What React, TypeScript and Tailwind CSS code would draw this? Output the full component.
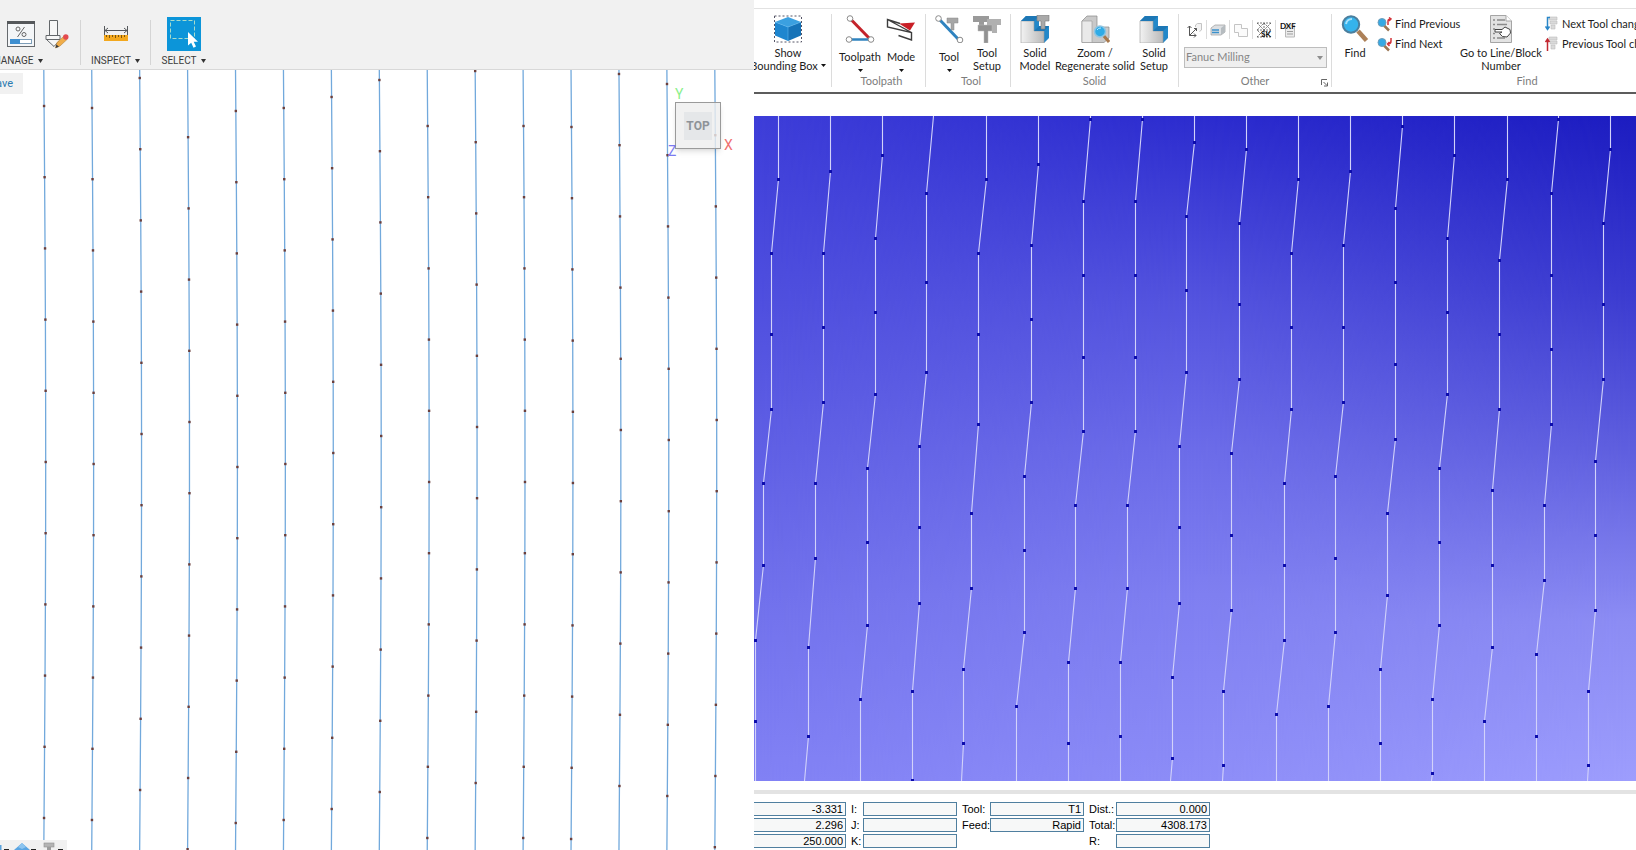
import { ReactNode } from 'react'
import { clsx } from 'clsx'

type Segment = [x: number, ys: number[]]

interface ToolpathLine {
  top:      number
  segments: Segment[]
  bottom:   number
}

// Simulated toolpath, one entry per pass
const PASSES: ToolpathLine[] = [
  { top: 25,  segments: [[25, [63]], [18, [137, 218, 293]], [10, [367, 449]], [2, [524, 605]]], bottom: 2 },
  { top: 77,  segments: [[77, [55]], [70, [137, 211, 286]], [62, [367, 442]], [55, [531, 620]]], bottom: 51 },
  { top: 129, segments: [[129, [39]], [122, [122, 196, 278]], [114, [352, 426, 509]], [107, [583]]], bottom: 107 },
  { top: 180, segments: [[173, [77, 166, 256]], [166, [330, 411, 487]], [159, [575, 664]]], bottom: 159 },
  { top: 233, segments: [[233, [63]], [225, [137, 218, 308]], [218, [397, 472]], [210, [553, 627]]], bottom: 208 },
  { top: 285, segments: [[285, [48]], [278, [129, 203, 286]], [271, [360, 434, 516]], [263, [590]]], bottom: 263 },
  { top: 337, segments: [[337, [3]], [330, [85, 159, 241, 315]], [322, [389, 472]], [315, [546, 627]]], bottom: 315 },
  { top: 389, segments: [[389, [3]], [382, [85, 159, 241, 315]], [374, [389, 472]], [367, [546, 620]]], bottom: 367 },
  { top: 441, segments: [[441, [26]], [433, [100, 174, 256]], [426, [330, 411, 487]], [419, [561, 642]]], bottom: 417 },
  { top: 493, segments: [[493, [33]], [486, [107, 188, 263]], [478, [337, 419, 494]], [470, [575, 649]]], bottom: 469 },
  { top: 545, segments: [[545, [63]], [538, [137, 211, 293]], [531, [367, 449, 524]], [523, [598]]], bottom: 523 },
  { top: 597, segments: [[597, [55]], [590, [129, 211, 286]], [582, [360, 442, 516]], [575, [590]]], bottom: 575 },
  { top: 649, segments: [[649, [10]], [642, [92, 166, 248, 323]], [634, [397, 479]], [627, [553, 627]]], bottom: 627 },
  { top: 701, segments: [[701, [39]], [694, [122, 196, 278]], [686, [352, 426, 509]], [679, [583, 657]]], bottom: 678 },
  { top: 754, segments: [[754, [63]], [746, [144, 218, 293]], [739, [374, 449, 531]], [731, [605]]], bottom: 731 },
  { top: 805, segments: [[805, [3]], [798, [77, 159, 233, 308]], [791, [389, 464]], [783, [538, 620]]], bottom: 783 },
  { top: 857, segments: [[857, [33]], [850, [107, 188, 263]], [842, [345, 419, 494]], [835, [575, 649]]], bottom: 834 },
]

// First point of every CAM line, measured from the top of the canvas
const CAM_STARTS = [36, 38, 8, -4, 41, 38, 27, 10, 56, 1, 56, 57, 4, 14, -6]
const CAM_STEP   = 71.2
const CAM_HEIGHT = 780

function camX(index: number, y: number) {
  return 43.8 + index * 47.93 + 1.9 * Math.sin((Math.PI * y) / CAM_HEIGHT)
}

/* ---------- left: CAM window ---------- */

function CamLines() {
  return (
    <svg className="block w-full h-full" viewBox="0 0 754 780" preserveAspectRatio="none" aria-hidden="true">
      {CAM_STARTS.map((start, i) => {
        const ys: number[] = []
        for (let y = start; y < CAM_HEIGHT; y += CAM_STEP) ys.push(y)
        const points = [0, ...ys, CAM_HEIGHT].map(y => `${camX(i, y)},${y}`).join(' ')
        return (
          <g key={i}>
            <polyline points={points} fill="none" stroke="#72a9dc" strokeWidth="1.3" />
            {ys.map(y => (
              <rect key={y} x={camX(i, y) - 1.2} y={y - 1.2} width="2.4" height="2.4" fill="#6b3f3c" />
            ))}
          </g>
        )
      })}
    </svg>
  )
}

function ManageIcon() {
  return (
    <svg width="30" height="28" viewBox="0 0 30 28">
      <rect x="1.5" y="1.5" width="27" height="25" fill="#f4f6f8" stroke="#666a6e" />
      <rect x="1" y="1" width="28" height="3" fill="#55585b" />
      <circle cx="12" cy="9" r="2" fill="none" stroke="#666" />
      <circle cx="18" cy="14.5" r="2" fill="none" stroke="#666" />
      <path d="M18.5 7 L11.5 17" stroke="#666" />
      <rect x="4.5" y="19.5" width="21" height="4" fill="#fff" stroke="#7d9db8" />
      <rect x="4" y="19" width="10" height="5" fill="#3f8fd0" />
    </svg>
  )
}

function ToolEditIcon() {
  return (
    <svg width="26" height="30" viewBox="0 0 26 30">
      <path d="M5.5 1.5 h8 v15 h-8 z M2 16.5 h14 v4 h-14 z M2.5 20.5 L10 27.5 L15 22" fill="#f7f7f7" stroke="#63676a" />
      <path d="M11.5 29 L13 23.5 L20 17 L23 20.5 L16 27 z" fill="#f0ad4a" stroke="#a9772f" strokeWidth=".5" />
      <path d="M11.5 29 L12.4 25.5 L15 27.8 z" fill="#3a3a3a" />
      <circle cx="21.8" cy="18" r="2.7" fill="#e34a4f" />
    </svg>
  )
}

function InspectIcon() {
  return (
    <svg width="26" height="16" viewBox="0 0 26 16">
      <path d="M1.5 0 v9 M24.5 0 v9 M2 4.5 h22 M5 2 L2 4.5 L5 7 M21 2 L24 4.5 L21 7" fill="none" stroke="#55585b" />
      <rect x="1" y="9" width="24" height="6" fill="#f3a81e" />
      <path d="M3.5 9 v2 M6.5 9 v3 M9.5 9 v2 M12.5 9 v3 M15.5 9 v2 M18.5 9 v3 M21.5 9 v2" stroke="#7d560c" />
    </svg>
  )
}

function SelectIcon() {
  return (
    <svg width="34" height="34" viewBox="0 0 34 34">
      <rect width="34" height="34" fill="#0c95d9" />
      <rect x="3.5" y="3.5" width="24" height="18" fill="none" stroke="#a8dccb" strokeDasharray="4 2" />
      <path d="M21 15 v13.500 l3.200 -2.700 l2.300 5 l2.500 -1.200 l-2.300 -4.800 h4.300 z" fill="#fff" />
    </svg>
  )
}

function CamMenu({ label, className, children }: { label: string; className: string; children: ReactNode }) {
  return (
    <button className={clsx('flex flex-col items-center shrink-0', className)}>
      <span className="h-9 flex items-center justify-center gap-2">{children}</span>
      <span className="h-4 mt-px flex items-center gap-1 text-[10px] leading-4 text-[#3c3c3c] whitespace-nowrap">
        {label}
        <svg width="5" height="4" viewBox="0 0 5 4"><path d="M0 0 h5 l-2.500 4 z" fill="#333" /></svg>
      </span>
    </button>
  )
}

function ViewCube() {
  return (
    <div className="absolute top-[32px] right-[33px] w-[46px] h-[47px]">
      <div className="w-full h-full border border-[#9a9a9a] bg-[#ededed]/80 shadow-md flex items-center justify-center">
        <button className="w-7 h-7 bg-[#e3e5e8]/90 text-xs font-bold text-[#8e9398] font-[Roboto,sans-serif]">
          TOP
        </button>
      </div>
      <span className="absolute -top-4 left-0 text-sm leading-4 text-[#8cf08c]">Y</span>
      <span className="absolute top-[35px] left-[49px] text-sm leading-4 text-[#f07070]">X</span>
      <span className="absolute top-[41px] -left-[7px] text-sm leading-4 text-[#7a7af0]">Z</span>
    </div>
  )
}

function CamWindow() {
  return (
    <section className="min-w-0 flex flex-col overflow-hidden bg-white font-[Roboto,sans-serif]">
      <header className="h-[70px] shrink-0 flex pt-4 bg-[#f1f1f1] border-b border-[#d8d8d8] overflow-hidden">
        <CamMenu label="MANAGE" className="w-[78px] pl-[6px] items-start! [&>span:last-child]:-ml-[14px]">
          <ManageIcon />
          <ToolEditIcon />
        </CamMenu>
        <div className="w-px h-[45px] mt-1 ml-[2px] bg-[#d5d5d5] shrink-0" />
        <CamMenu label="INSPECT" className="w-[69px]"><InspectIcon /></CamMenu>
        <div className="w-px h-[45px] mt-1 bg-[#d5d5d5] shrink-0" />
        <CamMenu label="SELECT" className="w-[64px] pl-px"><SelectIcon /></CamMenu>
      </header>

      <div className="relative flex-1 min-h-0">
        <CamLines />

        {/* Save prompt, scrolled partly out of the window */}
        <div className="absolute top-[3px] left-0 w-[23px] h-[21px] bg-[#f1f1f1] flex justify-end overflow-hidden pr-[10px]">
          <button className="text-[11px] leading-5 text-[#2a7ab0]">Save</button>
        </div>

        <ViewCube />

        {/* Navigation bar */}
        <div className="absolute bottom-0 left-0 w-[67px] h-[10px] bg-[#f1f1f1] overflow-hidden">
          <svg className="block" width="67" height="10" viewBox="0 0 67 10">
            <path d="M0 5 h1.500 v5 h-1.500 z" fill="#5aa2dc" />
            <path d="M22 3 L30 10 H14 z" fill="#5aa5e2" />
            <path d="M22 3 L26 7 L22 9 L18 7 z" fill="#8cc4ef" />
            <rect x="44" y="3" width="10" height="4" fill="#b4b4b4" stroke="#909090" strokeWidth=".6" />
            <rect x="47" y="7" width="4" height="3" fill="#9c9c9c" />
            <path d="M4 9.500 h5 M31 9.500 h5 M58 9.500 h5" stroke="#222" />
          </svg>
        </div>
      </div>
    </section>
  )
}

/* ---------- right: ribbon icons ---------- */

function BoundingBoxIcon() {
  return (
    <svg width="30" height="28" viewBox="0 0 30 28">
      <rect x="1.500" y="1" width="27" height="26" fill="none" stroke="#556" strokeDasharray="2 2" />
      <path d="M15 2 L28 7 L15 12 L2 7 z" fill="#3ba0e0" />
      <path d="M2 7 L15 12 V26 L2 20.500 z" fill="#1e86cf" />
      <path d="M28 7 L15 12 V26 L28 20.500 z" fill="#1673b8" />
      <path d="M2 7 L15 12 L28 7 M15 12 V26" fill="none" stroke="#5cb7ee" strokeWidth=".6" />
    </svg>
  )
}

function ToolpathIcon() {
  return (
    <svg width="30" height="28" viewBox="0 0 30 28">
      <path d="M5.500 4 L25 24" stroke="#c4232b" strokeWidth="3" />
      <path d="M4 24.500 H25" stroke="#2f83bf" strokeWidth="2.500" />
      <g fill="#fff" stroke="#8b8b8b">
        <circle cx="5" cy="3.500" r="2.800" />
        <circle cx="4" cy="24.500" r="2.800" />
        <circle cx="26" cy="24.500" r="2.800" />
      </g>
    </svg>
  )
}

function ModeIcon() {
  return (
    <svg width="30" height="28" viewBox="0 0 30 28">
      <path d="M13 8.500 L29 7.500 L24 15.500 z" fill="#c91f26" />
      <path d="M14 8.500 L1.500 4.500 V12 L25.500 17.500 V25 L12.500 20.500 M1.500 4.500 L25.500 17.500" fill="none" stroke="#3d3d3d" strokeWidth="1.400" />
    </svg>
  )
}

function ToolIcon() {
  return (
    <svg width="30" height="28" viewBox="0 0 30 28">
      <path d="M5 4 L25 25" stroke="#2f83bf" strokeWidth="3" />
      <g fill="#fff" stroke="#8b8b8b">
        <circle cx="4.500" cy="3.500" r="2.800" />
        <circle cx="26" cy="25" r="2.800" />
      </g>
      <path d="M13 3 h11 v5 h-4 v7 h-3 v-7 h-4 z" fill="#a6a6a6" stroke="#8a8a8a" strokeWidth=".5" />
    </svg>
  )
}

function ToolSetupIcon() {
  return (
    <svg width="30" height="28" viewBox="0 0 30 28">
      <path d="M1 1 h16 v6 h-5 v8 h-5 v-8 h-6 z" fill="#9a9a9a" />
      <path d="M15 4 h14 v6 h-4 v8 h-5 v-8 h-5 z" fill="#b0b0b0" />
      <path d="M6 10 h14 v6 h-4 v12 h-4 v-12 h-6 z" fill="#929292" stroke="#bbb" strokeWidth=".5" />
    </svg>
  )
}

function SolidIcon({ withTool = false }: { withTool?: boolean }) {
  return (
    <svg width="30" height="28" viewBox="0 0 30 28">
      <defs>
        <linearGradient id="solid" x1="0" x2="1">
          <stop offset="0" stopColor="#f2f2f2" />
          <stop offset="1" stopColor="#b9b9b9" />
        </linearGradient>
      </defs>
      <path d="M1 6 L6 1 H19 V11 H29 V23 L24 28 H1 z" fill="#2388c9" />
      <path d="M1 6 H14 V16 H24 V28 H1 z" fill="url(#solid)" stroke="#9b9b9b" strokeWidth=".6" />
      <path d="M1 6 L6 1 H19 L14 6 z M14 16 L19 11 H29 L24 16 z" fill="#1d77b5" />
      {withTool && <path d="M17 0 h12 v6 h-4 v8 h-4 v-8 h-4 z" fill="#a9a9a9" stroke="#7c7c7c" strokeWidth=".6" />}
    </svg>
  )
}

function ZoomSolidIcon() {
  return (
    <svg width="30" height="28" viewBox="0 0 30 28">
      <path d="M2 6 L7 1 H17 V12 H29 V23 L24 27.500 H2 z" fill="#c9c9c9" stroke="#888" strokeWidth=".7" />
      <path d="M2 6 H12 V27.500 H2 z" fill="#e9e9e9" stroke="#999" strokeWidth=".6" />
      <path d="M23 20 L29 27" stroke="#a8784c" strokeWidth="3" />
      <circle cx="20" cy="16.500" r="5.500" fill="#2fabe6" stroke="#8fc5e2" strokeWidth="1.500" />
      <path d="M17 15 a4 4 0 0 1 4 -2" fill="none" stroke="#b5e6ff" />
    </svg>
  )
}

function FindIcon() {
  return (
    <svg width="28" height="28" viewBox="0 0 28 28">
      <path d="M17 16 L25.500 25.500" stroke="#ad8158" strokeWidth="4.500" />
      <circle cx="10" cy="9.500" r="8.200" fill="#35b3ec" stroke="#4b7f9e" strokeWidth="2" />
      <path d="M5 9 a6 6 0 0 1 6 -5" fill="none" stroke="#a8e2fb" strokeWidth="2" />
    </svg>
  )
}

function SmallFindIcon({ next = false }: { next?: boolean }) {
  return (
    <svg width="15" height="15" viewBox="0 0 15 15">
      <path d="M7 8.500 L12 13.500" stroke="#9b7653" strokeWidth="2.500" />
      <circle cx="5" cy="5.500" r="4" fill="#35a9e4" stroke="#6f9db9" />
      {next
        ? <path d="M14 1 V4 Q14 7 11 7 M12.500 5 L10.500 7 L12.500 9" fill="none" stroke="#d2333a" strokeWidth="1.500" />
        : <path d="M11 8 V4 Q11 2 14 2 M12 .5 L14 2 L12 4" fill="none" stroke="#d2333a" strokeWidth="1.500" />}
    </svg>
  )
}

function GoToIcon() {
  return (
    <svg width="22" height="28" viewBox="0 0 22 28">
      <path d="M.500 .500 H16 L21.500 6 V27.500 H.500 z" fill="#e3e3e3" stroke="#a5a5a5" />
      <path d="M16 .500 V6 H21.500" fill="#fff" stroke="#a5a5a5" />
      <path d="M3 5 h2 M7 5 h8 M3 9.500 h2 M7 9.500 h10 M3 14 h2 M3 18.500 h2 M3 23 h2 M7 23 h8" stroke="#8a8a8a" strokeWidth="1.500" />
      <path d="M5 14.500 H12 L15 12 L20 14.500 L20.500 18 L17 22 L12.500 21.500 L9.500 18.500 L12 17 H5 z" fill="#fff" stroke="#444" />
    </svg>
  )
}

function ToolChangeIcon({ next = false }: { next?: boolean }) {
  return (
    <svg width="14" height="16" viewBox="0 0 14 16">
      <path d="M4 1 h8 v3 h-8 z M5 5 h7 v3 h-7 z M6 9 h4 v4 h-4 z" fill="#dadada" stroke="#bcbcbc" strokeWidth=".6" />
      {next
        ? <path d="M5 1.500 H2.500 V13 M.500 10.500 L2.500 13.500 L4.500 10.500" fill="none" stroke="#2a86c8" strokeWidth="1.500" />
        : <path d="M2.500 15 V4 M.500 6 L2.500 3 L4.500 6" fill="none" stroke="#c22730" strokeWidth="1.500" />}
    </svg>
  )
}

const OTHER_ICONS: { name: string; icon: ReactNode }[] = [
  {
    name: 'Axes',
    icon: (
      <>
        <path d="M8.500 5 V3 L10.500 1.500 H14.500 V8 L12.500 9.500" fill="#f3f3f3" stroke="#c4c4c4" />
        <path d="M2.500 4 V13.500 H9 M2.500 13.500 L9.500 6.500 M.500 6 L2.500 4 L4.500 6 M7 11.500 L9 13.500 L7 15.500 M7 6.500 H9.500 V9" fill="none" stroke="#555" />
      </>
    ),
  },
  {
    name: 'Stock',
    icon: (
      <>
        <path d="M1 6 L5 3 H15 V10 L11 13 H1 z" fill="#dcdfe2" stroke="#9b9b9b" strokeWidth=".7" />
        <path d="M2 8 h7 M2 10.500 h7" stroke="#3b91cb" strokeWidth="1.500" />
        <path d="M11 6 L15 3 V10 L11 13 z" fill="#b6bcc0" />
      </>
    ),
  },
  { name: 'Profile', icon: <path d="M1.500 2.500 H8.500 V6.500 H14.500 V14.500 H5.500 V10.500 H1.500 z" fill="#fbfbfb" stroke="#c4c4c4" /> },
  {
    name: 'Sketch',
    icon: (
      <>
        <path d="M1 1 L15 15 M15 1 L1 15 M8 1 V15 M1 8 H15 M8 1 L15 8 L8 15 L1 8 z M1 1 H15 M1 15 H15" fill="none" stroke="#555" strokeWidth=".8" strokeDasharray="2 1" />
        <text x="5" y="15" fontSize="8" fontWeight="700" fill="#111">SK</text>
      </>
    ),
  },
  {
    name: 'DXF',
    icon: (
      <>
        <path d="M5.500 3 h9 v12 h-9 z" fill="#ececec" stroke="#b9b9b9" />
        <path d="M7 9.500 h6 M7 12 h6" stroke="#9d9d9d" />
        <text x="0" y="7" fontSize="8" fontWeight="700" fill="#111">DXF</text>
      </>
    ),
  },
]

/* ---------- right: ribbon ---------- */

function Caret() {
  return <svg className="inline-block" width="5" height="3" viewBox="0 0 5 3"><path d="M0 0 h5 l-2.500 3 z" fill="#111" /></svg>
}

interface RibbonButtonProps {
  icon:      ReactNode
  lines:     string[]
  className: string
  menu?:     boolean
}

function RibbonButton({ icon, lines, className, menu }: RibbonButtonProps) {
  const below = menu && lines.length === 1
  return (
    <button className={clsx('flex flex-col items-center shrink-0 whitespace-nowrap', className)}>
      <span className="h-[30px] flex items-center">{icon}</span>
      <span className={clsx('flex flex-col items-center leading-[13px]', below ? 'mt-[6px]' : 'mt-[2px]')}>
        {lines.map((line, i) => (
          <span key={line} className="flex items-center gap-[3px]">
            {line}
            {menu && !below && i === lines.length - 1 && <Caret />}
          </span>
        ))}
      </span>
      {below && <span className="h-[9px] flex items-end"><Caret /></span>}
    </button>
  )
}

function SmallButton({ icon, label }: { icon: ReactNode; label: string }) {
  return (
    <button className="h-5 flex items-center gap-[3px] whitespace-nowrap">
      {icon}
      {label}
    </button>
  )
}

function RibbonGroup({ label, className, children }: { label?: string; className: string; children: ReactNode }) {
  return (
    <div className={clsx('shrink-0 flex flex-col border-r border-[#dcdcdc]', className)}>
      <div className="h-[61px] flex">{children}</div>
      <div className="h-3 text-center leading-3 text-[#7c7c7c]">{label}</div>
    </div>
  )
}

function Ribbon() {
  return (
    <header className="shrink-0 mt-2 h-[86px] flex pt-[5px] pb-[5px] border-t border-t-[#e2e2e2] border-b-2 border-b-[#5c5c5c] overflow-hidden text-[11px] text-[#1c1c1c] font-[Lato,sans-serif]">
      <RibbonGroup className="w-[78px]">
        <RibbonButton className="w-[68px]" icon={<BoundingBoxIcon />} lines={['Show', 'Bounding Box']} menu />
      </RibbonGroup>

      <RibbonGroup className="w-[94px] pl-[6px]" label="Toolpath">
        <RibbonButton className="w-[44px]" icon={<ToolpathIcon />} lines={['Toolpath']} menu />
        <RibbonButton className="w-[38px]" icon={<ModeIcon />} lines={['Mode']} menu />
      </RibbonGroup>

      <RibbonGroup className="w-[85px] pl-[6px]" label="Tool">
        <RibbonButton className="w-[34px]" icon={<ToolIcon />} lines={['Tool']} menu />
        <RibbonButton className="w-[42px]" icon={<ToolSetupIcon />} lines={['Tool', 'Setup']} />
      </RibbonGroup>

      <RibbonGroup className="w-[168px] px-1" label="Solid">
        <RibbonButton className="w-[40px]" icon={<SolidIcon withTool />} lines={['Solid', 'Model']} />
        <RibbonButton className="w-[80px]" icon={<ZoomSolidIcon />} lines={['Zoom /', 'Regenerate solid']} />
        <RibbonButton className="w-[38px]" icon={<SolidIcon />} lines={['Solid', 'Setup']} />
      </RibbonGroup>

      <RibbonGroup className="relative w-[153px] px-[5px]" label="Other">
        <div className="flex flex-col gap-2">
          <div className="flex pt-[6px] divide-x divide-[#dcdcdc]">
            {OTHER_ICONS.map(({ name, icon }) => (
              <button key={name} aria-label={name} className="w-[23px] h-[19px] flex items-center justify-center">
                <svg width="16" height="16" viewBox="0 0 16 16">{icon}</svg>
              </button>
            ))}
          </div>
          <div className="relative">
            <select
              disabled
              aria-label="Machine"
              className="appearance-none block w-[143px] h-[21px] pl-px bg-[#efefef] border border-[#bdbdbd] text-[#868686] opacity-100"
            >
              <option>Fanuc Milling</option>
            </select>
            <svg className="absolute right-1 top-[9px]" width="6" height="4" viewBox="0 0 6 4">
              <path d="M0 0 h6 l-3 4 z" fill="#8e8e8e" />
            </svg>
          </div>
        </div>
        <button aria-label="Other settings" className="absolute right-[3px] bottom-0">
          <svg width="7" height="8" viewBox="0 0 7 8">
            <path d="M.500 6 V.500 H6 M2.500 3 L6 6.500 M6.500 3.500 V7 H3" fill="none" stroke="#666" />
          </svg>
        </button>
      </RibbonGroup>

      <RibbonGroup className="w-[386px] pl-[5px]" label="Find">
        <RibbonButton className="w-[36px]" icon={<FindIcon />} lines={['Find']} />
        <div className="w-[87px] pl-[4px]">
          <SmallButton icon={<SmallFindIcon />} label="Find Previous" />
          <SmallButton icon={<SmallFindIcon next />} label="Find Next" />
        </div>
        <RibbonButton className="w-[82px]" icon={<GoToIcon />} lines={['Go to Line/Block', 'Number']} />
        <div className="pl-[3px]">
          <SmallButton icon={<ToolChangeIcon next />} label="Next Tool change" />
          <SmallButton icon={<ToolChangeIcon />} label="Previous Tool change" />
        </div>
      </RibbonGroup>
    </header>
  )
}

/* ---------- right: simulation ---------- */

function Simulation() {
  return (
    <div className="relative flex-1 min-h-0 mt-[22px] bg-[linear-gradient(to_bottom,#2c2ccf,#5454df_28%,#6c6ce9_50%,#7f7ff1_72%,#8d8df8)]">
      <div className="absolute inset-0 bg-[linear-gradient(to_bottom,#3d3dd8,#4f4fde_28%,#5f5fe4_50%,#7070eb_72%,#8181f4)] [mask-image:linear-gradient(to_right,black,transparent_50%)]" />
      <div className="absolute inset-0 bg-[linear-gradient(to_bottom,#1c1cc0,#3a3acf_26%,#5e5ede_50%,#8c8cf3_76%,#9d9dfd)] [mask-image:linear-gradient(to_right,transparent_50%,black)]" />
      <svg className="relative block w-full h-full" viewBox="0 0 882 665" preserveAspectRatio="none" aria-hidden="true">
        {PASSES.map(({ top, segments, bottom }) => {
          const dots = segments.flatMap(([x, ys]) => ys.map(y => [x, y]))
          const points = [[top, 0], ...dots, [bottom, 665]].map(([x, y]) => `${x - 0.5},${y}`).join(' ')
          return (
            <g key={top}>
              <polyline points={points} fill="none" stroke="#d2d2fa" strokeWidth="1.1" />
              {dots.map(([x, y]) => (
                <rect key={y} x={x - 2} y={y - 1} width="3" height="3" fill="#0c0cac" />
              ))}
            </g>
          )
        })}
      </svg>
    </div>
  )
}

/* ---------- right: status bar ---------- */

function Field({ id, label, value = '' }: { id: string; label: string; value?: string }) {
  return (
    <>
      <label htmlFor={id} className="leading-[14px]">{label}</label>
      <input
        id={id}
        readOnly
        value={value}
        className="w-full h-[14px] px-[2px] border border-[#4f7f9f] bg-[#f7f8f8] text-right leading-3 outline-none"
      />
    </>
  )
}

function StatusBar() {
  return (
    <footer className="shrink-0 h-[48px] overflow-hidden flex text-[11px] text-black font-['Liberation_Sans',Arial,sans-serif]">
      {/* Axis positions run off the left edge */}
      <div className="w-[92px] shrink-0 flex justify-end overflow-hidden">
        <div className="shrink-0 grid grid-cols-[12px_94px] gap-y-[2px] content-start">
          <Field id="x" label="X:" value="-3.331" />
          <Field id="y" label="Y:" value="2.296" />
          <Field id="z" label="Z:" value="250.000" />
        </div>
      </div>
      <div className="ml-[5px] grid grid-cols-[12px_94px] gap-y-[2px] content-start">
        <Field id="i" label="I:" />
        <Field id="j" label="J:" />
        <Field id="k" label="K:" />
      </div>
      <div className="ml-[5px] grid grid-cols-[28px_94px] gap-y-[2px] content-start">
        <Field id="tool" label="Tool:" value="T1" />
        <Field id="feed" label="Feed:" value="Rapid" />
      </div>
      <div className="ml-[5px] grid grid-cols-[27px_94px] gap-y-[2px] content-start">
        <Field id="dist" label="Dist.:" value="0.000" />
        <Field id="total" label="Total:" value="4308.173" />
        <Field id="r" label="R:" />
      </div>
    </footer>
  )
}

export default function App() {
  return (
    <main className="grid grid-cols-[754fr_882fr] grid-rows-[100%] h-screen overflow-hidden bg-white">
      <CamWindow />
      <section className="min-w-0 flex flex-col overflow-hidden bg-white">
        <Ribbon />
        <Simulation />
        <div className="h-1 mt-[9px] mb-2 shrink-0 bg-[#e3e3e3]" />
        <StatusBar />
      </section>
    </main>
  )
}
